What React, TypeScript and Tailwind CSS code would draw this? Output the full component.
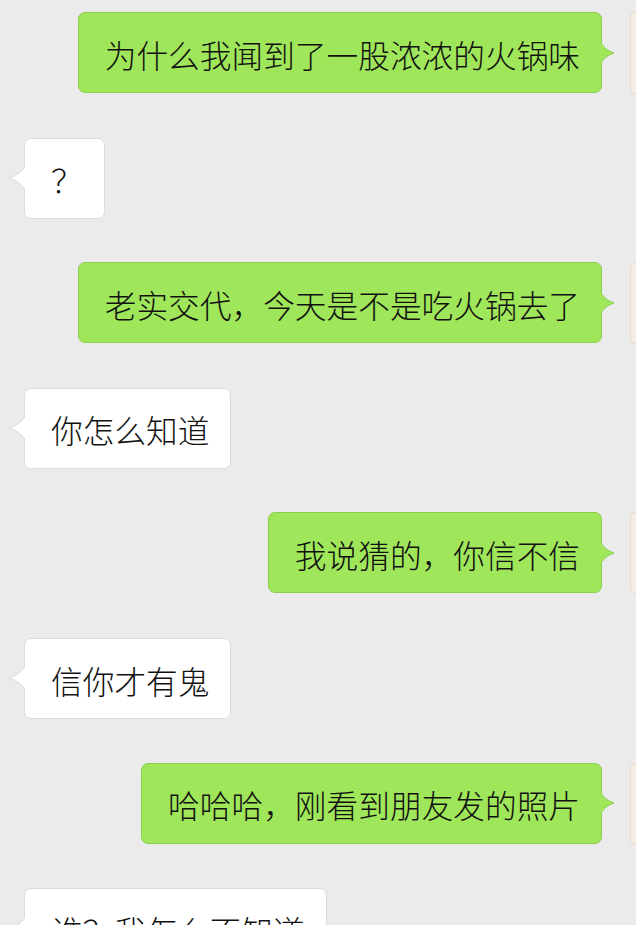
import React from "react";

type Msg = { me: boolean; text: string };

const messages: Msg[] = [
  { me: true, text: "为什么我闻到了一股浓浓的火锅味" },
  { me: false, text: "？" },
  { me: true, text: "老实交代，今天是不是吃火锅去了" },
  { me: false, text: "你怎么知道" },
  { me: true, text: "我说猜的，你信不信" },
  { me: false, text: "信你才有鬼" },
  { me: true, text: "哈哈哈，刚看到朋友发的照片" },
  { me: false, text: "谁？我怎么不知道" },
];

function Tail({ me }: { me: boolean }) {
  // little pointer on the side of the bubble
  if (me) {
    return (
      <svg
        className="absolute right-[-14px] top-1/2 -translate-y-1/2"
        width="15"
        height="22"
        viewBox="0 0 15 22"
      >
        <path d="M1 1 Q5 8 14 11 Q5 14 1 21 Z" fill="#9fe65a" />
        <path d="M1 1 Q5 8 14 11 Q5 14 1 21" fill="none" stroke="#8ccf4f" strokeWidth="1" />
        <rect x="0" y="1.5" width="1.6" height="19" fill="#9fe65a" />
      </svg>
    );
  }
  return (
    <svg
      className="absolute left-[-17px] top-1/2 -translate-y-1/2"
      width="18"
      height="24"
      viewBox="0 0 18 24"
    >
      <path d="M17 1 Q11 9 1 12 Q11 15 17 23 Z" fill="#ffffff" />
      <path d="M17 1 Q11 9 1 12 Q11 15 17 23" fill="none" stroke="#dcdcdc" strokeWidth="1" />
      <rect x="16.4" y="1.5" width="1.6" height="21" fill="#ffffff" />
    </svg>
  );
}

function Bubble({ msg }: { msg: Msg }) {
  return (
    <div
      className={`relative h-[81px] shrink-0 flex items-center justify-center pl-[26px] pr-[21px] pt-[4px] rounded-[7px] border text-[31.7px] font-light leading-none text-[#111] whitespace-nowrap ${
        msg.me ? "bg-[#9fe65a] border-[#8ccf4f]" : "bg-white border-[#dcdcdc] min-w-[79px]"
      }`}
    >
      {msg.text}
      <Tail me={msg.me} />
    </div>
  );
}

export default function App() {
  return (
    <div
      className="w-[636px] h-[925px] overflow-hidden bg-[#ebebeb] flex flex-col gap-[43.6px] pt-[12px]"
      style={{ fontFamily: '"Noto Sans CJK SC", "Noto Sans", sans-serif' }}
    >
      {messages.map((m, i) =>
        m.me ? (
          <div key={i} className="flex justify-end items-start gap-[28px] -mr-[76px]">
            <Bubble msg={m} />
            <div className="w-[82px] h-[82px] shrink-0 rounded-[4px] bg-[#f4ece3] border border-[#e6ddd2]" />
          </div>
        ) : (
          <div key={i} className="flex items-start pl-[24px]">
            <Bubble msg={m} />
          </div>
        )
      )}
    </div>
  );
}
